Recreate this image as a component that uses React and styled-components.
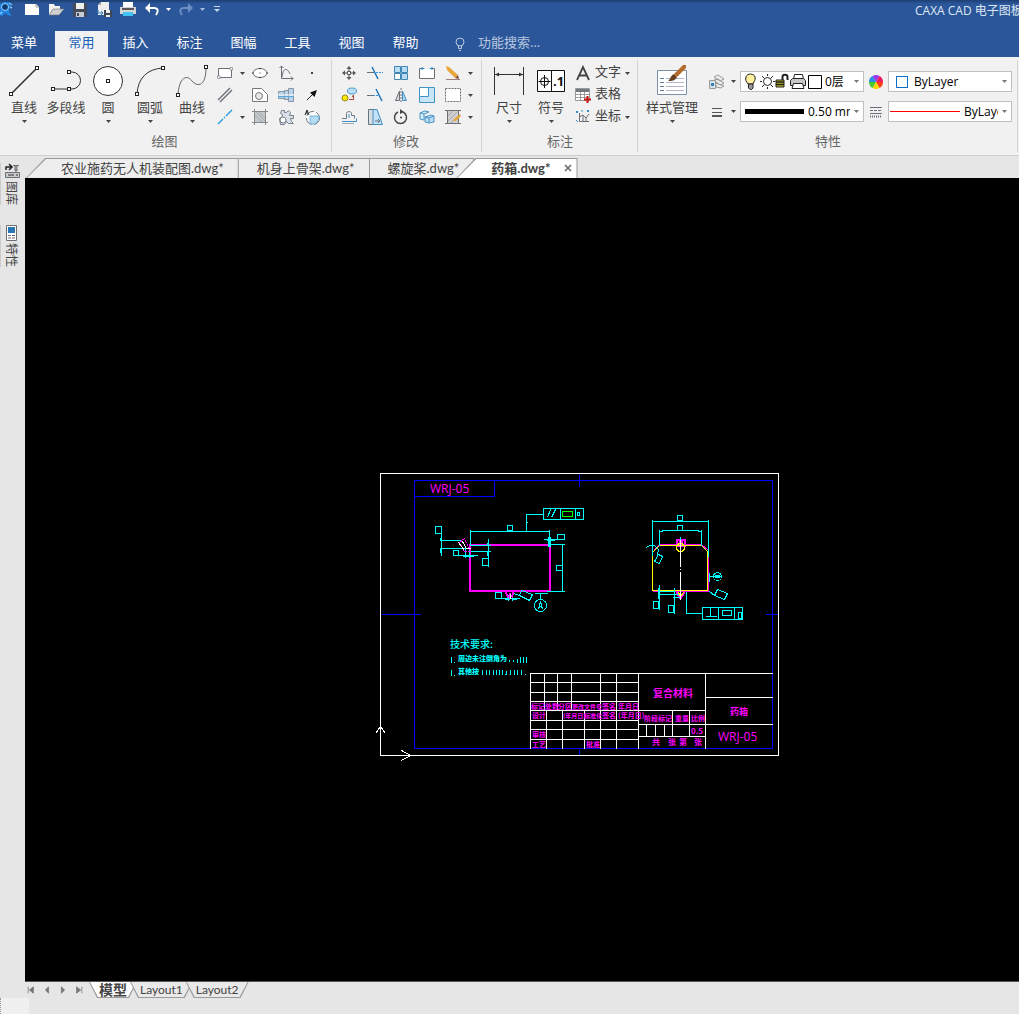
import React from "react";
import styled, { createGlobalStyle } from "styled-components";

const GlobalStyle = createGlobalStyle`
  * {
    box-sizing: border-box;
  }
  body {
    margin: 0;
    font-family: "Open Sans", "Noto Sans CJK SC", sans-serif;
    font-size: 13px;
    color: #444444;
  }
  button, input, select {
    font: inherit;
    color: inherit;
    margin: 0;
    padding: 0;
    border: 0;
    background: none;
    white-space: nowrap;
  }
  svg {
    display: block;
    flex: none;
  }
`;

const Window = styled.div`
  display: flex;
  flex-direction: column;
  min-height: 100vh;
  background: #e6e6e6;
  overflow: hidden;
`;

const TitleBar = styled.header`
  display: flex;
  align-items: flex-start;
  height: 31px;
  background: linear-gradient(#1d4074, #2b579a 4px);
  color: #dfe7f3;
`;

const QuickButton = styled.button`
  display: flex;
  justify-content: center;
  align-items: center;
  width: ${(props) => props.$width}px;
  height: 18px;
`;

const Title = styled.div`
  flex: 0 0 104px;
  margin-left: auto;
  overflow: hidden;
  white-space: nowrap;
  font-size: 12px;
  line-height: 22px;
`;

const MenuBar = styled.nav`
  display: flex;
  height: 26px;
  background: #2b579a;
  color: #ffffff;
`;

const MenuTab = styled.button`
  width: 53px;
  margin-right: 1px;
  padding-bottom: 4px;
  line-height: 22px;
  background: ${(props) => (props.$active ? "#f1f1f1" : "transparent")};
  color: ${(props) => (props.$active ? "#1a62b8" : "#ffffff")};
`;

const MenuRoot = styled(MenuTab)`
  width: 48px;
  margin-right: 7px;
`;

const Search = styled.label`
  display: flex;
  align-items: center;
  gap: 12px;
  margin-left: 21px;
  color: #b9c7df;
`;

const SearchInput = styled.input`
  width: 120px;
  padding-bottom: 4px;
  line-height: 22px;
  outline: none;
  &::placeholder {
    color: #b9c7df;
    opacity: 1;
  }
`;

const RibbonBar = styled.div`
  display: flex;
  background: #f1f1f1;
  border-bottom: 1px solid #cfcfcf;
  padding: 3px 0;
`;

const Group = styled.section`
  display: flex;
  flex-direction: column;
  width: ${(props) => props.$width}px;
  padding: 2px 5px 0 ${(props) => props.$left}px;
  border-right: 1px solid #d4d4d4;
`;

const WideGroup = styled(Group)`
  flex: 1;
  width: auto;
  margin-right: 1px;
`;

const GroupBody = styled.div`
  display: flex;
  height: 70px;
`;

const GroupLabel = styled.h2`
  margin: 0;
  font-size: 13px;
  font-weight: 400;
  line-height: 18px;
  padding-bottom: 2px;
  text-align: center;
  color: #666666;
`;

const LargeButton = styled.button`
  display: flex;
  flex-direction: column;
  align-items: center;
  width: ${(props) => props.$width || 42}px;
  height: 66px;
  padding-top: 2px;
  line-height: 18px;
  svg + span {
    margin-bottom: 4px;
  }
`;

const IconGrid = styled.div`
  display: grid;
  grid-template-columns: ${(props) => props.$columns};
  grid-template-rows: repeat(3, 22px);
`;

const IconButton = styled.button`
  display: flex;
  align-items: center;
  justify-content: center;
`;

const TextRows = styled.div`
  display: flex;
  flex-direction: column;
`;

const TextButton = styled.button`
  display: flex;
  align-items: center;
  gap: 4px;
  height: 22px;
  padding-left: 3px;
  line-height: 18px;
  span {
    padding-bottom: 4px;
  }
`;

const Properties = styled.div`
  display: grid;
  flex: 1;
  grid-template-columns: 18px 14px 1fr 24px 1fr;
  grid-template-rows: 21px 21px;
  gap: 9px 0;
  padding: 9px 0 0 8px;
  align-items: center;
  justify-items: center;
`;

const Combo = styled.label`
  display: flex;
  align-items: center;
  width: 100%;
  min-width: 0;
  height: 21px;
  padding: 0 4px;
  border: 1px solid #c0c0c0;
  background: #ffffff;
  color: #000000;
  font-size: 12px;
`;

const Select = styled.select`
  flex: 1;
  min-width: 0;
  margin-right: 4px;
  appearance: none;
  outline: none;
  overflow: hidden;
  text-overflow: clip;
  padding-left: ${(props) => props.$indent || 0}px;
`;

const Thick = styled.span`
  flex: none;
  width: 59px;
  height: 5px;
  margin-right: 4px;
  background: #000000;
`;

const RedLine = styled.span`
  flex: none;
  width: 70px;
  margin: 0 4px 0 -3px;
  border-top: 1px solid #ff0000;
`;

const BlueBox = styled.span`
  flex: none;
  width: 12px;
  height: 12px;
  margin-left: 3px;
  border: 1px solid #0a6fc9;
`;

const WorkArea = styled.div`
  display: flex;
  flex: 1;
`;

const SideBar = styled.aside`
  display: flex;
  flex-direction: column;
  gap: 20px;
  width: 25px;
  padding-top: 7px;
`;

const SideTab = styled.button`
  display: flex;
  flex-direction: column;
  align-items: center;
  gap: 2px;
  width: 23px;
  border-left: 1px solid #cccccc;
  font-size: 12px;
  span {
    writing-mode: vertical-rl;
    text-orientation: sideways;
    line-height: 16px;
    margin-right: 3px;
  }
`;

const Main = styled.main`
  display: flex;
  flex: 1;
  flex-direction: column;
  min-width: 0;
`;

const DocTabs = styled.div`
  display: flex;
  height: 22px;
  padding: 2px 0 0 1px;
  font-family: Lato, "Noto Sans CJK SC", sans-serif;
`;

const slant = "polygon(19px 0, 100% 0, 100% 100%, 0 100%)";

const DocTab = styled.div`
  position: relative;
  display: flex;
  align-items: center;
  gap: 12px;
  margin-left: ${(props) => (props.$active ? -18 : 0)}px;
  padding: 0 ${(props) => (props.$active ? 5 : 15)}px 0
    ${(props) => (props.$slanted ? 35 : 18)}px;
  background: #9a9a9a;
  clip-path: ${(props) => (props.$slanted ? slant : "none")};
  font-weight: ${(props) => (props.$active ? 700 : 400)};
  &::before {
    content: "";
    position: absolute;
    inset: 1px 1px 0 ${(props) => (props.$slanted ? 1 : 0)}px;
    background: ${(props) => (props.$active ? "#ffffff" : "#eeeeee")};
    clip-path: ${(props) => (props.$slanted ? slant : "none")};
  }
  button {
    position: relative;
    line-height: 18px;
  }
`;

const Canvas = styled.div`
  flex: 1;
  padding: 292px 0 0 349px;
  background: #000000;
`;

const SheetBar = styled.div`
  display: flex;
  height: 17px;
  border-top: 1px solid #555555;
  font-family: Lato, "Noto Sans CJK SC", sans-serif;
`;

const NavButton = styled.button`
  display: flex;
  align-items: center;
  width: 16px;
  padding-left: 2px;
`;

const trapezoid =
  "polygon(0 0, 100% 0, calc(100% - 8px) 100%, 8px 100%)";

const SheetTab = styled.button`
  position: relative;
  margin-left: ${(props) => (props.$active ? 0 : -7)}px;
  padding: 0 10px;
  background: #9a9a9a;
  clip-path: ${trapezoid};
  font-size: ${(props) => (props.$active ? 14 : 12)}px;
  font-weight: ${(props) => (props.$active ? 700 : 400)};
  line-height: 14px;
  &::before {
    content: "";
    position: absolute;
    inset: 0 1px 1px;
    background: ${(props) => (props.$active ? "#ffffff" : "#e9e9e9")};
    clip-path: ${trapezoid};
  }
  span {
    position: relative;
  }
`;

const Footer = styled.footer`
  height: 16px;
`;

const Grip = styled.div`
  width: 29px;
  height: 16px;
  background: #f0f0f0;
  border-left: 1px dotted #999999;
`;

const Arrow = ({ color = "#444" }) => (
  <svg width="5" height="3" viewBox="0 0 5 3" fill={color}>
    <path d="M0 0H5L2.5 3Z" />
  </svg>
);

const Icon = ({ size = 16, children, ...rest }) => (
  <svg
    width={size}
    height={size}
    viewBox={`0 0 ${size} ${size}`}
    fill="none"
    stroke="#6b6f75"
    {...rest}
  >
    {children}
  </svg>
);

const Node = ({ x, y }) => (
  <rect x={x - 1.5} y={y - 1.5} width="3" height="3" fill="#fff" stroke="#222" />
);

const quickTools = [
  {
    name: "CAXA",
    width: 16,
    icon: (
      <Icon stroke="none">
        <path d="M0 3L4 1L9 1L10 5L9 11L12 15L8 14L5 12L2 15L0 14Z" fill="#1f86e6" />
        <circle cx="5" cy="6" r="3.5" fill="#0e3a78" stroke="#9bd6ff" />
        <path d="M9 2L12 4M10 6L12 7M2 11L0 13" stroke="#7cc8ff" strokeWidth="1.5" />
      </Icon>
    ),
  },
  {
    name: "新建",
    width: 32,
    icon: (
      <Icon stroke="none">
        <path d="M1 3H12L15 6V14H1Z" fill="#fff" />
        <path d="M12 3V6H15" stroke="#999" />
      </Icon>
    ),
  },
  {
    name: "打开",
    width: 16,
    icon: (
      <Icon stroke="none">
        <path d="M1 3H6L7 5H12V8H5L1 14Z" fill="#f2f2f2" />
        <path d="M5 8H16L11 14H1Z" fill="#cfcfcf" stroke="#777" strokeWidth=".6" />
      </Icon>
    ),
  },
  {
    name: "保存",
    width: 32,
    icon: (
      <Icon stroke="none">
        <path d="M1 2H15V16H1Z" fill="#424b59" />
        <path d="M4 2H12V8H4Z" fill="#eee" />
        <path d="M4 11H12V16H4Z" fill="#c9cdd2" />
        <path d="M5 12H7V15H5Z" fill="#424b59" />
      </Icon>
    ),
  },
  {
    name: "另存为",
    width: 16,
    icon: (
      <Icon stroke="none">
        <path d="M5 1H13V14H2V4Z" fill="#eee" />
        <path d="M5 1V4H2Z" fill="#aaa" />
        <path d="M2 9V12H7M5 10L7 12L5 14" stroke="#2c7fc0" />
        <path d="M8 9H16V16H8Z" fill="#3d4754" />
        <path d="M10 9H14V12H10ZM10 14H14V16H10Z" fill="#eee" />
      </Icon>
    ),
  },
  {
    name: "打印",
    width: 32,
    icon: (
      <Icon stroke="none">
        <path d="M3 1H13V6H3Z" fill="#fff" />
        <path d="M0 6H16V13H0Z" fill="#d5d5d5" />
        <path d="M2 7H14V9H2Z" fill="#555" />
        <path d="M3 11H13V15H3Z" fill="#43c3f0" />
      </Icon>
    ),
  },
  {
    name: "撤销",
    width: 16,
    icon: (
      <Icon stroke="#fff" strokeWidth="2">
        <path d="M3 7H10C14 7 15 10 12 14" />
        <path d="M6 2L1 7L6 12Z" fill="#fff" strokeWidth="0" />
      </Icon>
    ),
  },
  { name: "撤销列表", width: 17, icon: <Arrow color="#fff" /> },
  {
    name: "重做",
    width: 17,
    icon: (
      <Icon stroke="#6d8fc4" strokeWidth="2">
        <path d="M13 7H6C2 7 1 10 4 14" />
        <path d="M10 2L15 7L10 12Z" fill="#6d8fc4" strokeWidth="0" />
      </Icon>
    ),
  },
  { name: "重做列表", width: 17, icon: <Arrow color="#a9bddc" /> },
  {
    name: "自定义",
    width: 12,
    icon: (
      <Icon size={6} stroke="#c9d5e8">
        <path d="M0 .5H6" />
        <path d="M0 3H6L3 6Z" fill="#c9d5e8" stroke="none" />
      </Icon>
    ),
  },
];

const menus = ["常用", "插入", "标注", "图幅", "工具", "视图", "帮助"];

const drawTools = [
  {
    label: "直线",
    arrow: true,
    icon: (
      <>
        <path d="M4 30L30 4" strokeWidth="1.6" />
        <Node x={4} y={30} />
        <Node x={30} y={4} />
      </>
    ),
  },
  {
    label: "多段线",
    icon: (
      <>
        <path d="M4 25H23A8.5 8.5 0 0 0 23 8H20" />
        <Node x={4} y={25} />
        <Node x={20} y={25} />
        <Node x={20} y={8} />
      </>
    ),
  },
  {
    label: "圆",
    arrow: true,
    icon: (
      <>
        <circle cx="17" cy="17" r="14.5" fill="#fff" />
        <Node x={17} y={17} />
      </>
    ),
  },
  {
    label: "圆弧",
    arrow: true,
    icon: (
      <>
        <path d="M4 30C5 14 14 5 30 4" />
        <Node x={4} y={30} />
        <Node x={30} y={4} />
      </>
    ),
  },
  {
    label: "曲线",
    arrow: true,
    icon: (
      <>
        <path d="M3 31C4 13 12 10 17 17C22 23 31 23 31 4" stroke="#666" />
        <Node x={3} y={31} />
        <Node x={31} y={3} />
      </>
    ),
  },
];

const drawIcons = [
  {
    name: "矩形",
    icon: (
      <Icon>
        <path d="M1.5 3.5H14.5V12.5H1.5Z" fill="#fff" />
        <path d="M13 2.5H15.5V5H13ZM.5 11H3V13.5H.5Z" fill="#fff" strokeWidth=".6" />
      </Icon>
    ),
  },
  { name: "矩形选项", icon: <Arrow /> },
  {
    name: "椭圆",
    icon: (
      <Icon>
        <ellipse cx="8" cy="8" rx="7" ry="4.5" fill="#fff" />
        <path d="M7.5 8H8.5M7 3.5H9M14.5 8H16M7 12.5H9M0 8H1.5" stroke="#333" />
      </Icon>
    ),
  },
  {
    name: "公式曲线",
    icon: (
      <Icon>
        <path d="M3.5 1V13.5H15M1.5 3L3.5 1L5.5 3M13 11.5L15 13.5L13 15.5" />
        <path d="M4 12C5 3 9 2 12 9" />
      </Icon>
    ),
  },
  {
    name: "点",
    icon: (
      <Icon>
        <path d="M7 7H9V9H7Z" fill="#444" stroke="none" />
      </Icon>
    ),
  },
  {
    name: "平行线",
    icon: (
      <Icon strokeWidth="1.4">
        <path d="M1 13L13 1M3 15L15 3" />
      </Icon>
    ),
  },
  { name: "" },
  {
    name: "轮廓",
    icon: (
      <Icon stroke="#777">
        <path d="M.5 1.5H9.5L15.5 7.5V14.5H.5Z" fill="#fff" />
        <circle cx="7" cy="9" r="3.5" fill="#e8e8e8" />
      </Icon>
    ),
  },
  {
    name: "孔轴",
    icon: (
      <Icon stroke="#8595a5">
        <path d="M.5 4.5H6.5V11.5H.5ZM6.5 3.5H10.5V12.5H6.5ZM10.5 1.5H15.5V14.5H10.5Z" fill="#b9d3ea" />
        <path d="M0 8H16" stroke="#fff" />
        <path d="M0 9.5H16" stroke="#5aa7dc" />
      </Icon>
    ),
  },
  {
    name: "箭头",
    icon: (
      <Icon stroke="#222">
        <path d="M3 13L9 7" />
        <path d="M13 3L10.5 10L6 5.5Z" fill="#111" stroke="none" />
      </Icon>
    ),
  },
  {
    name: "中心线",
    icon: (
      <Icon stroke="#1e9be0" strokeWidth="1.3">
        <path d="M1 15L6 10M7 9L8 8M9 7L15 1" />
      </Icon>
    ),
  },
  { name: "中心线选项", icon: <Arrow /> },
  {
    name: "剖面线",
    icon: (
      <Icon stroke="#858a8e">
        <path d="M2.5 2.5H13.5V13.5H2.5Z" fill="#c4c8ca" />
        <path d="M0 2.5H16M0 13.5H16M2.5 0V16M13.5 0V16" />
        <path d="M4 3L13 12M3 6L10 13M7 3L13 9" strokeWidth=".5" />
      </Icon>
    ),
  },
  {
    name: "齿轮",
    icon: (
      <Icon stroke="#77808c">
        <path d="M3.5 1.5H6.5V3.5H8.5L10.5 1.5L12.5 3.5L11.5 6.5H15.5V9.5H12.5L13.5 12.5L15.5 14.5H10.5L8.5 12.5L6.5 15.5H2.5L1.5 9.5L4.5 7.5V5.5L2.5 4.5Z" fill="#d9e0e9" />
        <circle cx="5" cy="11" r="3" fill="#fff" />
      </Icon>
    ),
  },
  {
    name: "局部放大",
    icon: (
      <Icon stroke="#6a7480">
        <circle cx="9" cy="9" r="6.5" strokeDasharray="9 2" fill="#fff" />
        <path d="M6 7H15C15 12 12 15 9 15H6Z" fill="#b4dcf4" stroke="#77b3d6" />
        <path d="M1 6L3 1L5 6M2 4H4" stroke="#222" />
      </Icon>
    ),
  },
];

const modifyIcons = [
  {
    name: "平移",
    icon: (
      <Icon stroke="none" fill="#555">
        <path d="M6.5 6.5H9.5V9.5H6.5Z" fill="#fff" stroke="#555" />
        <path d="M8 1L10.5 4H5.5ZM8 15L5.5 12H10.5ZM1 8L4 5.5V10.5ZM15 8L12 10.5V5.5Z" />
        <path d="M7.5 3H8.5V6H7.5ZM7.5 10H8.5V13H7.5ZM3 7.5H6V8.5H3ZM10 7.5H13V8.5H10Z" />
      </Icon>
    ),
  },
  {
    name: "裁剪",
    icon: (
      <Icon>
        <path d="M0 7.5H7" />
        <path d="M9 7.5H16" stroke="#3194d8" strokeDasharray="2 1" />
        <path d="M5 2L11 14" stroke="#1570b8" strokeWidth="1.4" />
      </Icon>
    ),
  },
  {
    name: "阵列",
    icon: (
      <Icon stroke="#3f86b4">
        <path d="M1.5 1.5H7.5V7.5H1.5ZM8.5 1.5H14.5V7.5H8.5ZM8.5 8.5H14.5V14.5H8.5Z" fill="#b7dcf3" />
        <path d="M1.5 8.5H7.5V14.5H1.5Z" fill="#fff" />
      </Icon>
    ),
  },
  {
    name: "打断",
    icon: (
      <Icon>
        <path d="M3.5 3.5H.5V13.5H15.5V3.5H12.5" fill="#fff" />
        <path d="M5.5 3.5H2M10.5 3.5H14M3 2V5M13 2V5" stroke="#2a87c8" />
      </Icon>
    ),
  },
  {
    name: "删除",
    icon: (
      <Icon stroke="none">
        <path d="M1 1L4 2L13 10L10 13L2 5Z" fill="#eaa53b" />
        <path d="M10 13L13 10L14 14Z" fill="#7a5138" />
        <path d="M1 14.5H15" stroke="#a08078" />
      </Icon>
    ),
  },
  { name: "删除选项", icon: <Arrow /> },
  {
    name: "平移复制",
    icon: (
      <Icon>
        <ellipse cx="11" cy="4" rx="4.5" ry="3" fill="#b9e0f5" stroke="#4a9cca" />
        <circle cx="4" cy="11" r="3" fill="#ffe900" stroke="#948b16" />
        <path d="M8 12.5H12.5V8M11 10L12.5 8" stroke="#b54038" />
      </Icon>
    ),
  },
  {
    name: "延伸",
    icon: (
      <Icon>
        <path d="M0 8.5H6" />
        <path d="M6 8.5H11" stroke="#3194d8" strokeDasharray="2 1" />
        <path d="M9 2L15 14" stroke="#1570b8" strokeWidth="1.4" />
      </Icon>
    ),
  },
  {
    name: "镜像",
    icon: (
      <Icon>
        <path d="M6.5 4V13.5H2.5Z" fill="#ddd" />
        <path d="M9.5 4V13.5H13.5Z" fill="#a8d5f2" stroke="#478fbc" />
        <path d="M8 1V15" strokeDasharray="2 1" />
      </Icon>
    ),
  },
  {
    name: "缩放",
    icon: (
      <Icon stroke="#4395c4">
        <path d="M.5.5H15.5V15.5H.5Z" fill="#c7e5f7" />
        <path d="M.5.5H9.5V9.5H.5Z" fill="#fff" />
      </Icon>
    ),
  },
  {
    name: "选择",
    icon: (
      <Icon>
        <path d="M.5 1.5H15.5V14.5H.5Z" fill="#fff" strokeDasharray="2 1" />
      </Icon>
    ),
  },
  { name: "选择选项", icon: <Arrow /> },
  {
    name: "等距线",
    icon: (
      <Icon stroke="#687b8a">
        <path d="M1 9.5H5.5V4.5C5.5 2 10.5 2 10.5 4.5V6.5H13.5V9.5" />
        <path d="M1 12.5H15.5V9.5M8 5V9" stroke="#3d93c8" />
        <path d="M1 14.5H13" strokeWidth=".6" />
      </Icon>
    ),
  },
  {
    name: "拉伸",
    icon: (
      <Icon stroke="#64747f">
        <path d="M1.5 .5H9.5V15.5H1.5Z" fill="#d6dde3" />
        <path d="M6 .5H10L15.5 15.5H6Z" fill="#bfe2f6" stroke="#4590bd" />
        <path d="M8 12H12M11 10L13 12L11 14" />
      </Icon>
    ),
  },
  {
    name: "旋转",
    icon: (
      <Icon stroke="#4a4a4a" strokeWidth="1.5">
        <path d="M10 3A6 6 0 1 1 5 3" />
        <path d="M7 0V5L11 3Z" fill="#444" stroke="none" />
        <circle cx="8" cy="8.5" r="1" fill="#444" stroke="none" />
      </Icon>
    ),
  },
  {
    name: "分解",
    icon: (
      <Icon stroke="#4a96c5">
        <path d="M1 4L6 2L10 3L5 5ZM1 4V10L5 11V5" fill="#d5ecf8" />
        <path d="M6 8L12 6L15 7V13L10 14L6 13ZM6 8L10 9V14M10 9L15 7" fill="#b7dcf3" />
      </Icon>
    ),
  },
  {
    name: "编辑填充",
    icon: (
      <Icon>
        <path d="M2.5 1.5H13.5V14.5H2.5Z" fill="#cfcfcf" />
        <path d="M0 1.5H16M0 14.5H16" />
        <path d="M3 7L8 2M3 12L12 3M6 14L13 7" strokeWidth=".4" />
        <path d="M15 5L9 10L8 12L11 12L16 7Z" fill="#e8a53c" stroke="none" />
      </Icon>
    ),
  },
  { name: "编辑填充选项", icon: <Arrow /> },
];

const annotations = [
  {
    label: "文字",
    arrow: true,
    icon: (
      <Icon strokeWidth="1.8" stroke="#444">
        <path d="M2 15L8 2L14 15M4 10.5H12" />
      </Icon>
    ),
  },
  {
    label: "表格",
    icon: (
      <Icon stroke="#9a9a9a">
        <path d="M.5 1.5H14.5V13.5H.5Z" fill="#fff" />
        <path d="M1 2H14V5H1Z" fill="#707880" stroke="none" />
        <path d="M1 7.5H14M1 10.5H14M5.5 5V13M9.5 5V13" />
        <path d="M12.5 9V16M9 12.5H16" stroke="#c81414" strokeWidth="2" />
      </Icon>
    ),
  },
  {
    label: "坐标",
    arrow: true,
    icon: (
      <Icon>
        <path d="M4.5 4V12.5H14M4 8L8 6L11 9L14 5M8 6V13M11 9V13" />
        <path d="M1 2L3 4M3 2L1 4M12 1L14 3M14 1L12 3M1 11L3 13M7 1V3" stroke="#308fce" />
      </Icon>
    ),
  },
];

const layerIcons = (
  <svg width="80" height="19" viewBox="0 0 80 19" fill="none" stroke="#222">
    <path d="M3 12C1 9 0 8 1 5C2 1 9 1 10 5C11 8 9 9 8 12Z" fill="#ffef9f" />
    <path d="M3.5 12V16L5 17.5H6.5L8 16V12Z" fill="#999" />
    <circle cx="22.5" cy="9.5" r="4" fill="#fff" />
    <path d="M22.5 2V4M22.5 15V17M15 9.5H17M28 9.5H30M17 4L19 6M26 13L28 15M28 4L26 6M19 13L17 15" />
    <path d="M31 8H39V15H31Z" fill="#bdb820" />
    <path d="M31 10H39M31 12.5H39" strokeWidth="1.5" />
    <path d="M37.5 8V5C37.5 2 42.5 2 42.5 5V8" strokeWidth="2" />
    <path d="M48.5 7L49.5 2.5H57.5L58.5 7" fill="#fff" />
    <path d="M45.5 8.5L47.5 6.5H58.5L60.5 8.5V13.5H45.5Z" fill="#c7c7c7" />
    <path d="M48.5 11.5H57.5L59 16.5H47Z" fill="#fff" />
    <path d="M63.5 3.5H76.5V16.5H63.5Z" fill="#fff" stroke="#000" />
  </svg>
);

const documents = [
  { name: "农业施药无人机装配图.dwg*", slanted: true },
  { name: "机身上骨架.dwg*" },
  { name: "螺旋桨.dwg*" },
  { name: "药箱.dwg*", slanted: true, active: true },
];

// title block captions: [x, baseline, size, text]
const captions = [
  [653, 697, 10, "复合材料"],
  [730, 715, 9, "药箱"],
  [531, 709, 7, "标记"],
  [545, 709, 7, "处数"],
  [558, 709, 7, "分区"],
  [572, 709, 6, "更改文件号"],
  [602, 709, 7, "签名"],
  [618, 709, 7, "年月日"],
  [532, 718, 7, "设计"],
  [563, 718, 6, "(年月日)"],
  [584, 718, 6, "标准化"],
  [602, 718, 7, "签名"],
  [618, 718, 7, "(年月日)"],
  [532, 737, 7, "审核"],
  [532, 747, 7, "工艺"],
  [586, 747, 7, "批准"],
  [644, 721, 7, "阶段标记"],
  [675, 721, 7, "重量"],
  [691, 721, 7, "比例"],
  [691, 734, 8, "0.5"],
  [652, 745, 8, "共"],
  [668, 745, 8, "张"],
  [679, 745, 8, "第"],
  [694, 745, 8, "张"],
];

const Drawing = () => (
  <svg
    width="406"
    height="292"
    viewBox="374 470 406 292"
    fill="none"
    shapeRendering="crispEdges"
    role="img"
    aria-label="药箱"
  >
    <g transform="translate(.5 .5)">
      <g stroke="#00f">
        <path d="M414 480H772V748H414ZM414 496H494V480" />
        <path d="M579 473V486M579 749V754M381 614H420M765 614H777" />
      </g>
      <g stroke="#fff">
        <path d="M380 473H778V755H380Z" />
        <path d="M375 733L380 726L385 733M401 750L410 755L401 760" />
        <path d="M530 748V673H772M530 682H638M530 692H638M530 701H638M530 710H705M530 720H638M530 729H638M530 739H638" />
        <path d="M544 673V710M557 673V710M571 673V710M600 673V748M616 673V748M638 673V748M705 673V748" />
        <path d="M546 710V748M562 710V748M584 710V748" />
        <path d="M638 724H772M638 736H705M705 697H772M672 710V736M689 710V736M646 724V736M655 724V736M664 724V736" />
      </g>
      {/* front view */}
      <path d="M469.5 544.5H549.5V590.5H469.5Z" stroke="#f0f" strokeWidth="2" />
      <g stroke="#0ff">
        <path d="M470 529V545M549 529V546M470 531H549M507 525H512V530H507Z" />
        <path d="M543 514H526V531M525 522H527M543 508H583V519H543ZM560 508V519M575 508V519" />
        <path d="M547 517L550 509M551 517L555 509M577 512H579V515H577Z" />
        <path d="M435 526H441V533H435ZM441 533V555M439 540H461M439 548H470M440 537V540M440 548V552" />
        <path d="M453 550H458V555H453ZM452 555H477M465 548V557M469 548V557M462 556H473" />
        <path d="M488 538V566M482 558H488V565H482ZM469 545H490M469 551H490M487 542V545M487 551V555" />
        <path d="M543 539H564V534H557V539M546 540H554M547 544H564M562 544V591M546 591H564M556 565H562V570H556Z" />
        <path d="M548 536V546M550 536V546" />
        <path d="M495 592H501V598H495ZM494 598H519M504 599H509M512 599H516M508 594V600M512 594V600" />
        <path d="M513 593L519 595L521 590L532 594L529 600L519 595M534 593H547M540 593V599" />
        <circle cx="540" cy="605" r="6" />
        <path d="M538 609L540 601L542 609M539 606H541" />
      </g>
      <path d="M562 511H572V516H562Z" stroke="#0f0" />
      <path d="M459 542L464 538L470 551H464Z" stroke="#f0f" strokeDasharray="3 1" />
      <path d="M458 542L464 550M462 541L466 548H470" stroke="#fff" />
      <path d="M505 592L508 597M513 592L511 597M509 592V598" stroke="#f0f" strokeWidth="2" />
      <path d="M510 593V598" stroke="#fff" />
      {/* side view */}
      <path d="M652 591H708V555M701 544L708 550M659 544L653 550" stroke="#f0f" />
      <path d="M659 544H701" stroke="#f0f" />
      <path d="M676 539H684V545H676ZM678 541H682M676 592L680 598L684 592" stroke="#f0f" strokeWidth="2" />
      <path d="M659 545H701L707 551V590H652V552L659 545M678 592L680 596L683 592" stroke="#ff0" />
      <circle cx="680" cy="547" r="4" stroke="#ff0" strokeWidth="1.5" />
      <g stroke="#0ff">
        <path d="M652 519V555M708 519V556M652 521H708M677 515H682V520H677Z" />
        <path d="M659 529V545M701 529V545M659 531H662V530H698V531H701M677 525H682V530H677Z" />
        <path d="M646 547L649 545H654L658 549L657 555" />
        <path d="M658 554L662 556L659 563L654 561Z" />
        <path d="M709 572V581M709 576H721M715 575H719V577H715Z" />
        <circle cx="717" cy="576" r="4" />
        <path d="M709 591L714 595L717 589L727 593L724 599L714 595" />
        <path d="M659 584V609M653 601H658V608H653ZM674 587V613M668 605H673V612H668Z" />
        <path d="M657 591H674M657 594H678M672 597H680M658 587V598" />
        <path d="M686 591V613H702M702 607H742V619H702ZM718 607V619M734 607V619" />
        <path d="M710 607V616M705 616H716M722 610H731V615H722ZM738 612H741V618H738Z" />
      </g>
      <path d="M680 537V566M680 568V569M680 571V599" stroke="#fff" />
      <path d="M680 536V539" stroke="#0ff" />
      <path
        d="M451 656V662M453 662H454M451 669V675M453 675H454M509 659V661M513 659V661M517 658V662M520 656V662M523 656V662M526 656V662"
        stroke="#0ff"
      />
      <path
        d="M482 669V674M486 669V674M489 669V674M493 669V674M496 669V674M499 669V674M502 669V674M506 670V674H504M510 669V674M514 669V674M517 669V674M521 669V674M525 673V674"
        stroke="#0ff"
      />
    </g>
    <g fill="#0ff" fontFamily="'Noto Sans CJK SC', sans-serif">
      <text x="450" y="648" fontSize="10" fontWeight="500">技术要求:</text>
      <text x="458" y="661" fontSize="7" fontWeight="900">周边未注倒角为</text>
      <text x="458" y="674" fontSize="7" fontWeight="900">其他按</text>
    </g>
    <g fill="#f0f" fontFamily="'Noto Sans CJK SC', sans-serif">
      {captions.map(([x, y, size, text]) => (
        <text key={`${x}-${y}`} x={x} y={y} fontSize={size} fontWeight={700}>
          {text}
        </text>
      ))}
    </g>
    <g fill="#f0f" fontFamily="'Open Sans', sans-serif" fontSize="12">
      <text x="430" y="493">WRJ-05</text>
      <text x="718" y="741">WRJ-05</text>
    </g>
  </svg>
);

const App = () => {
  return (
    <Window>
      <GlobalStyle />
      <TitleBar>
        {quickTools.map((tool) => (
          <QuickButton key={tool.name} $width={tool.width} aria-label={tool.name}>
            {tool.icon}
          </QuickButton>
        ))}
        <Title>CAXA CAD 电子图板</Title>
      </TitleBar>
      <MenuBar>
        <MenuRoot>菜单</MenuRoot>
        {menus.map((menu, index) => (
          <MenuTab key={menu} $active={index === 0}>
            {menu}
          </MenuTab>
        ))}
        <Search>
          <svg width="12" height="14" viewBox="0 0 12 14" fill="none" stroke="#b9c7df">
            <circle cx="6" cy="5" r="4" />
            <path d="M4.5 9V11.5H7.5V9M5 13.5H7" />
          </svg>
          <SearchInput placeholder="功能搜索..." aria-label="功能搜索" />
        </Search>
      </MenuBar>

      <RibbonBar>
        <Group $width={332} $left={3}>
          <GroupBody>
            {drawTools.map((tool) => (
              <LargeButton key={tool.label}>
                <Icon size={34} stroke="#333">
                  {tool.icon}
                </Icon>
                <span>{tool.label}</span>
                {tool.arrow && <Arrow />}
              </LargeButton>
            ))}
            <IconGrid $columns="24px 10px 26px 26px 26px">
              {drawIcons.map((item, index) =>
                item.icon ? (
                  <IconButton key={item.name} aria-label={item.name}>
                    {item.icon}
                  </IconButton>
                ) : (
                  <span key={index} />
                )
              )}
            </IconGrid>
          </GroupBody>
          <GroupLabel>绘图</GroupLabel>
        </Group>

        <Group $width={150} $left={4}>
          <GroupBody>
            <IconGrid $columns="repeat(5, 26px) 8px">
              {modifyIcons.map((item) => (
                <IconButton key={item.name} aria-label={item.name}>
                  {item.icon}
                </IconButton>
              ))}
            </IconGrid>
          </GroupBody>
          <GroupLabel>修改</GroupLabel>
        </Group>

        <Group $width={156} $left={6}>
          <GroupBody>
            <LargeButton>
              <Icon size={34} stroke="#333">
                <path d="M2.5 3V31M31.5 3V31M3 10.5H31" />
                <path d="M3 10.5L7 8.5V12.5ZM31 10.5L27 8.5V12.5Z" fill="#333" stroke="none" />
              </Icon>
              <span>尺寸</span>
              <Arrow />
            </LargeButton>
            <LargeButton>
              <Icon size={34} stroke="#111">
                <path d="M3.5 6.5H30.5V27.5H3.5ZM17.5 6.5V27.5" fill="#fff" />
                <circle cx="10.5" cy="17.5" r="4" />
                <path d="M4.5 17.5H16.5M10.5 11V24" />
                <text x="19" y="22" fontSize="13" fontWeight="700" fill="#111" stroke="none">
                  .1
                </text>
              </Icon>
              <span>符号</span>
              <Arrow />
            </LargeButton>
            <TextRows>
              {annotations.map((item) => (
                <TextButton key={item.label}>
                  {item.icon}
                  <span>{item.label}</span>
                  {item.arrow && <Arrow />}
                </TextButton>
              ))}
            </TextRows>
          </GroupBody>
          <GroupLabel>标注</GroupLabel>
        </Group>

        <WideGroup $left={6}>
          <GroupBody>
            <LargeButton $width={56}>
              <Icon size={34}>
                <path d="M2.5 6.5H31.5V30.5H2.5Z" fill="#fff" stroke="#7890a8" />
                <path d="M5 14.5H9M5 18.5H9M5 22.5H9M5 26.5H9" stroke="#667f95" />
                <path d="M11 14.5H29M11 18.5H29M11 22.5H29M11 26.5H29" stroke="#b2b5c9" />
                <path d="M13 17C16 15 15 12 19 10L22 13C20 17 17 17 13 17Z" fill="#67401f" stroke="none" />
                <path d="M19 10L28 1H31V4L22 13Z" fill="#b36a2c" stroke="none" />
              </Icon>
              <span>样式管理</span>
              <Arrow />
            </LargeButton>
            <Properties>
              <IconButton aria-label="图层">
                <Icon stroke="#999">
                  <path d="M5 3L9 1L15 5L11 7ZM5 6L9 5L15 9L11 11ZM7 9L15 12L12 14L7 13Z" fill="#eee" />
                  <path d="M.5 6.5H6.5V14.5H.5Z" fill="#d7e4ee" />
                  <path d="M2 9H5V12H2Z" fill="#397fb0" stroke="none" />
                </Icon>
              </IconButton>
              <IconButton aria-label="图层选项">
                <Arrow />
              </IconButton>
              <Combo>
                {layerIcons}
                <Select aria-label="当前图层">
                  <option>0层</option>
                </Select>
                <Arrow color="#777" />
              </Combo>
              <IconButton aria-label="颜色">
                <Icon stroke="none">
                  <path d="M8 8L4.5 2A7 7 0 0 1 11.5 2Z" fill="#9b37e8" />
                  <path d="M8 8L11.5 2A7 7 0 0 1 15 8Z" fill="#f01860" />
                  <path d="M8 8H15A7 7 0 0 1 11.5 14Z" fill="#ff3d16" />
                  <path d="M8 8L11.5 14A7 7 0 0 1 4.5 14Z" fill="#ffd500" />
                  <path d="M8 8L4.5 14A7 7 0 0 1 1 8Z" fill="#48c92c" />
                  <path d="M8 8H1A7 7 0 0 1 4.5 2Z" fill="#258de8" />
                </Icon>
              </IconButton>
              <Combo>
                <BlueBox />
                <Select aria-label="当前颜色" $indent={6}>
                  <option>ByLayer</option>
                </Select>
                <Arrow color="#777" />
              </Combo>
              <IconButton aria-label="线宽">
                <Icon stroke="#555">
                  <path d="M3 4.5H13M3 8.5H13" />
                  <path d="M3 12H13" strokeWidth="2" />
                </Icon>
              </IconButton>
              <IconButton aria-label="线宽选项">
                <Arrow />
              </IconButton>
              <Combo>
                <Thick />
                <Select aria-label="当前线宽">
                  <option>0.50 mm</option>
                </Select>
                <Arrow color="#777" />
              </Combo>
              <IconButton aria-label="线型">
                <Icon>
                  <path d="M2 3.5H14M2 9.5H14" />
                  <path d="M2 6.5H14" strokeDasharray="3 1" />
                  <path d="M2 12.5H14" strokeWidth="2" strokeDasharray="1 1" />
                </Icon>
              </IconButton>
              <Combo>
                <RedLine />
                <Select aria-label="当前线型">
                  <option>ByLayer</option>
                </Select>
                <Arrow color="#777" />
              </Combo>
            </Properties>
          </GroupBody>
          <GroupLabel>特性</GroupLabel>
        </WideGroup>
      </RibbonBar>

      <WorkArea>
        <SideBar>
          <SideTab>
            <Icon>
              <path d="M2 7V4H7M5 1L8 4L5 7" stroke="#222" strokeWidth="1.5" />
              <path d="M9 2.5H15M12 2V8M11 3V8H13V3" />
              <path d="M1.5 9.5H15.5V14.5H1.5Z" fill="#ccc" />
              <path d="M4 12H10M12 12H14" stroke="#333" />
            </Icon>
            <span>图库</span>
          </SideTab>
          <SideTab>
            <Icon>
              <path d="M2.5 .5H12.5V15.5H2.5Z" fill="#fff" />
              <path d="M4 2H11V8H4Z" fill="#2775b3" stroke="none" />
              <path d="M4 10.5H7M8 10.5H11M4 13H7M8 13H11" />
            </Icon>
            <span>特性</span>
          </SideTab>
        </SideBar>
        <Main>
          <DocTabs>
            {documents.map((doc) => (
              <DocTab key={doc.name} $slanted={doc.slanted} $active={doc.active}>
                <button>{doc.name}</button>
                {doc.active && (
                  <button aria-label="关闭">
                    <Icon size={10} stroke="#666" strokeWidth="1.5">
                      <path d="M2 2L8 8M8 2L2 8" />
                    </Icon>
                  </button>
                )}
              </DocTab>
            ))}
          </DocTabs>
          <Canvas>
            <Drawing />
          </Canvas>
          <SheetBar>
            {["M1.5 1V9M8 1L3 5L8 9Z", "M7 1L3 5L7 9Z", "M3 1L7 5L3 9Z", "M8.5 1V9M2 1L7 5L2 9Z"].map(
              (d, index) => (
                <NavButton key={d} aria-label={["首页", "上一页", "下一页", "末页"][index]}>
                  <svg width="8" height="8" viewBox="0 0 10 10" fill="#777" stroke="#777">
                    <path d={d} strokeWidth="1" />
                  </svg>
                </NavButton>
              )
            )}
            <SheetTab $active>
              <span>模型</span>
            </SheetTab>
            <SheetTab>
              <span>Layout1</span>
            </SheetTab>
            <SheetTab>
              <span>Layout2</span>
            </SheetTab>
          </SheetBar>
        </Main>
      </WorkArea>
      <Footer>
        <Grip />
      </Footer>
    </Window>
  );
};

export default App;
